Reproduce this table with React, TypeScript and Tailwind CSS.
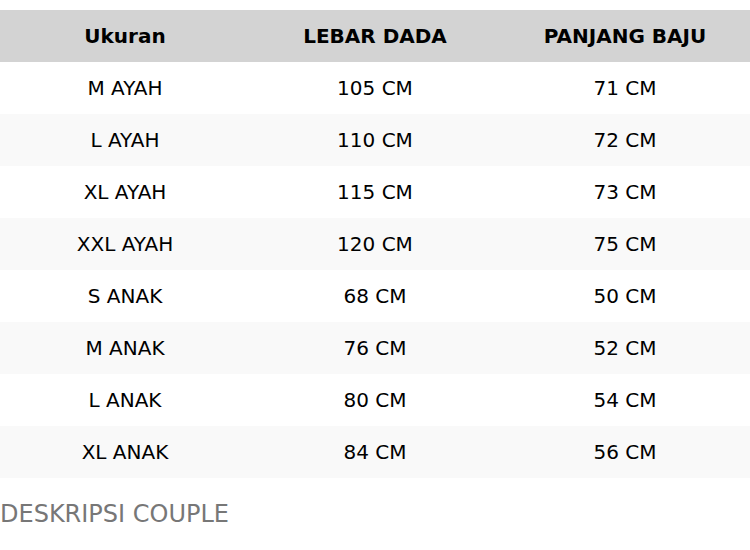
import React from "react";

const rows = [
  ["M AYAH", "105 CM", "71 CM"],
  ["L AYAH", "110 CM", "72 CM"],
  ["XL AYAH", "115 CM", "73 CM"],
  ["XXL AYAH", "120 CM", "75 CM"],
  ["S ANAK", "68 CM", "50 CM"],
  ["M ANAK", "76 CM", "52 CM"],
  ["L ANAK", "80 CM", "54 CM"],
  ["XL ANAK", "84 CM", "56 CM"],
];

export default function App() {
  return (
    <div className="w-[750px] h-[550px] bg-white overflow-hidden text-black" style={{ fontFamily: '"DejaVu Sans", sans-serif' }}>
      <div className="pt-[10px]">
        <table className="w-full border-collapse table-fixed text-[20px] leading-[24px]">
          <thead>
            <tr className="bg-[#d3d3d3] h-[52px]">
              <th className="font-bold text-center">Ukuran</th>
              <th className="font-bold text-center">LEBAR DADA</th>
              <th className="font-bold text-center">PANJANG BAJU</th>
            </tr>
          </thead>
          <tbody>
            {rows.map((r, i) => (
              <tr key={i} className={`h-[52px] ${i % 2 === 1 ? "bg-[#f9f9f9]" : "bg-white"}`}>
                {r.map((c, j) => (
                  <td key={j} className="text-center">{c}</td>
                ))}
              </tr>
            ))}
          </tbody>
        </table>
        <div className="mt-[20px] text-[24px] leading-[32px] text-[#777777]">DESKRIPSI COUPLE</div>
      </div>
    </div>
  );
}
